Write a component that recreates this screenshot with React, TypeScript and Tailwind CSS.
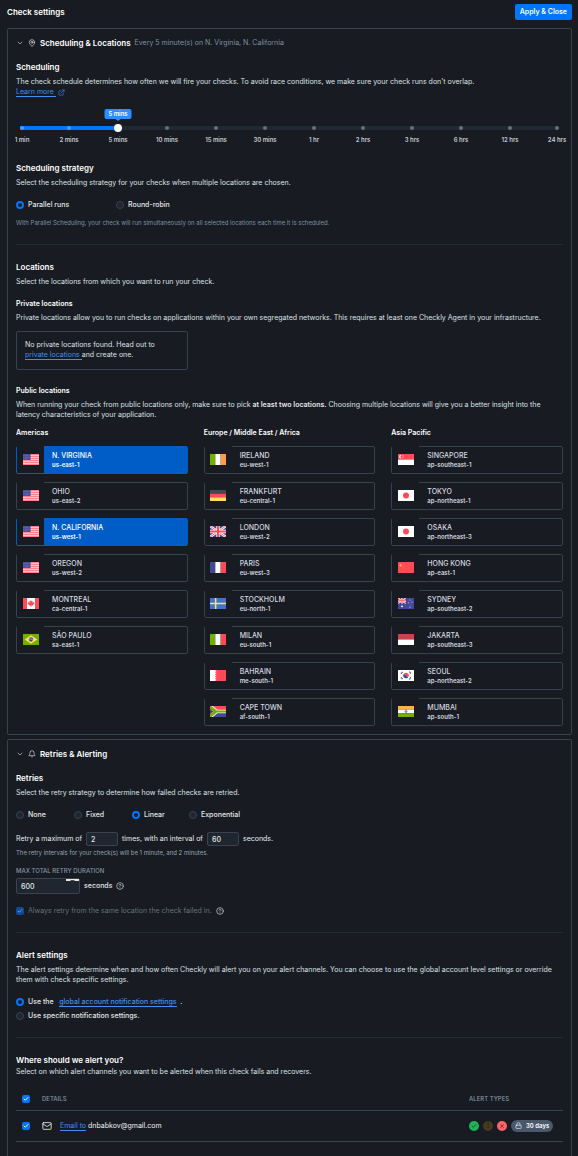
import React, { useState } from "react";
import { Bell, Check, ChevronDown, CircleHelp, ExternalLink, Lock, Mail, MapPin, X } from "lucide-react";

const intervals = ["1 min", "2 mins", "5 mins", "10 mins", "15 mins", "30 mins", "1 hr", "2 hrs", "3 hrs", "6 hrs", "12 hrs", "24 hrs"];

type Place = { name: string; code: string; flag: string };

const regions: { title: string; places: Place[] }[] = [
  {
    title: "Americas",
    places: [
      { name: "N. VIRGINIA", code: "us-east-1", flag: "us" },
      { name: "OHIO", code: "us-east-2", flag: "us" },
      { name: "N. CALIFORNIA", code: "us-west-1", flag: "us" },
      { name: "OREGON", code: "us-west-2", flag: "us" },
      { name: "MONTREAL", code: "ca-central-1", flag: "ca" },
      { name: "SÃO PAULO", code: "sa-east-1", flag: "br" },
    ],
  },
  {
    title: "Europe / Middle East / Africa",
    places: [
      { name: "IRELAND", code: "eu-west-1", flag: "ie" },
      { name: "FRANKFURT", code: "eu-central-1", flag: "de" },
      { name: "LONDON", code: "eu-west-2", flag: "gb" },
      { name: "PARIS", code: "eu-west-3", flag: "fr" },
      { name: "STOCKHOLM", code: "eu-north-1", flag: "se" },
      { name: "MILAN", code: "eu-south-1", flag: "it" },
      { name: "BAHRAIN", code: "me-south-1", flag: "bh" },
      { name: "CAPE TOWN", code: "af-south-1", flag: "za" },
    ],
  },
  {
    title: "Asia Pacific",
    places: [
      { name: "SINGAPORE", code: "ap-southeast-1", flag: "sg" },
      { name: "TOKYO", code: "ap-northeast-1", flag: "jp" },
      { name: "OSAKA", code: "ap-northeast-3", flag: "jp" },
      { name: "HONG KONG", code: "ap-east-1", flag: "cn" },
      { name: "SYDNEY", code: "ap-southeast-2", flag: "au" },
      { name: "JAKARTA", code: "ap-southeast-3", flag: "id" },
      { name: "SEOUL", code: "ap-northeast-2", flag: "kr" },
      { name: "MUMBAI", code: "ap-south-1", flag: "in" },
    ],
  },
];

const RED = "#ff4b55";
const NAVY = "#41479b";
const GREEN = "#73af00";

function Vertical({ colors }: { colors: string[] }) {
  return (
    <>
      {colors.map((c, i) => (
        <rect key={i} x={(i * 48) / 3} width="16" height="33" fill={c} />
      ))}
    </>
  );
}

function Horizontal({ colors }: { colors: string[] }) {
  const h = 33 / colors.length;
  return (
    <>
      {colors.map((c, i) => (
        <rect key={i} y={i * h} width="48" height={h} fill={c} />
      ))}
    </>
  );
}

function UnionJack() {
  return (
    <>
      <rect width="48" height="33" fill={NAVY} />
      <path d="M0 0L48 33M48 0L0 33" stroke="#fff" strokeWidth="7" />
      <path d="M0 0L48 33M48 0L0 33" stroke={RED} strokeWidth="2.6" />
      <path d="M24 0V33M0 16.5H48" stroke="#fff" strokeWidth="10" />
      <path d="M24 0V33M0 16.5H48" stroke={RED} strokeWidth="6" />
    </>
  );
}

const flagArt: Record<string, React.ReactNode> = {
  us: (
    <>
      <rect width="48" height="33" fill="#ffc4c8" />
      {[0, 1, 2, 3, 4, 5].map((i) => (
        <rect key={i} y={i * 6} width="48" height="3" fill="#ff8089" />
      ))}
      <rect width="23" height="18" fill="#4a4f9f" />
      <path d="M2 4.500H22M2 10.500H22M2 15H22" stroke="#a9acd2" strokeWidth="1.200" strokeDasharray="1.600 2.200" />
    </>
  ),
  ca: (
    <>
      <rect width="48" height="33" fill="#fff" />
      <rect width="12" height="33" fill={RED} />
      <rect x="36" width="12" height="33" fill={RED} />
      <path d="M24 6l2 4 3-1-1 5 4-2 1 3 2 1-6 6 0 1-4-.5V27h-2v-4.500l-4 .5 0-1-6-6 2-1 1-3 4 2-1-5 3 1z" fill={RED} />
    </>
  ),
  br: (
    <>
      <rect width="48" height="33" fill={GREEN} />
      <path d="M24 4L43 16.500L24 29L5 16.500Z" fill="#ffe15a" />
      <circle cx="24" cy="16.500" r="6.500" fill={NAVY} />
      <path d="M18 14.500q7-1 12 4" fill="none" stroke="#fff" strokeWidth="1.500" />
    </>
  ),
  ie: <Vertical colors={[GREEN, "#fff", "#ff9b4b"]} />,
  de: <Horizontal colors={["#464655", RED, "#ffe15a"]} />,
  gb: <UnionJack />,
  fr: <Vertical colors={[NAVY, "#fff", RED]} />,
  se: (
    <>
      <rect width="48" height="33" fill="#4173cd" />
      <path d="M17 0V33M0 16.500H48" stroke="#ffe15a" strokeWidth="4.500" />
    </>
  ),
  it: <Vertical colors={[GREEN, "#fff", RED]} />,
  bh: (
    <>
      <rect width="48" height="33" fill={RED} />
      <path d="M0 0H14L20 3.300L14 6.600L20 9.900L14 13.200L20 16.500L14 19.800L20 23.100L14 26.400L20 29.700L14 33H0Z" fill="#fff" />
    </>
  ),
  za: (
    <>
      <rect width="48" height="16.500" fill={RED} />
      <rect y="16.500" width="48" height="16.500" fill={NAVY} />
      <path d="M0 0L20 16.500L0 33M18 16.500H48" fill="none" stroke="#f5f5f5" strokeWidth="11" />
      <path d="M0 4L15 16.500L0 29Z" fill="#464655" />
      <path d="M0 1L19 16.500L0 32M18 16.500H48" fill="none" stroke={GREEN} strokeWidth="6.500" />
      <path d="M0 7.500L11 16.500L0 25.500" fill="none" stroke="#ffe15a" strokeWidth="2" />
    </>
  ),
  sg: (
    <>
      <Horizontal colors={[RED, "#fff"]} />
      <path d="M10 3.500a5 5 0 1 0 0 9.500a5.500 5.500 0 0 1 0-9.500" fill="#fff" />
      <path d="M12 5.500h1.500M16 5.500h1.500M14 3.500h1.500M12.500 10h1.500M16 10h1.500" stroke="#fff" strokeWidth="1.500" />
    </>
  ),
  jp: (
    <>
      <rect width="48" height="33" fill="#fff" />
      <circle cx="24" cy="16.500" r="9" fill={RED} />
    </>
  ),
  cn: (
    <>
      <rect width="48" height="33" fill={RED} />
      <path d="M8 5l1.300 3.400 3.700.1-2.900 2.300 1 3.500L8 12.200l-3.100 2.100 1-3.500L3 8.500l3.700-.1z" fill="#ffc850" />
      <path d="M15 4h1.500M18 7.500h1.500M18 11.500h1.500M15 15h1.500" stroke="#ffc850" strokeWidth="1.500" />
    </>
  ),
  au: (
    <>
      <rect width="48" height="33" fill={NAVY} />
      <svg width="24" height="17" viewBox="0 0 48 33" preserveAspectRatio="none">
        <UnionJack />
      </svg>
      <g fill="#fff">
        <circle cx="12" cy="25" r="2.800" />
        <circle cx="36" cy="6" r="1.500" />
        <circle cx="31" cy="14" r="1.500" />
        <circle cx="42" cy="12" r="1.500" />
        <circle cx="36" cy="27" r="1.800" />
        <circle cx="39" cy="18" r="1" />
      </g>
    </>
  ),
  id: <Horizontal colors={["#c8414b", "#fff"]} />,
  kr: (
    <>
      <rect width="48" height="33" fill="#fff" />
      <path d="M16.500 13a8 8 0 0 1 15 7q-4 2-7.500-3.500T16.500 13" fill={RED} />
      <path d="M16.500 13q3.500-2 7.500 3.500t7.500 3.500a8 8 0 0 1-15-7" fill={NAVY} />
      <path d="M9 11l5-6M34 5l5 6M9 22l5 6M34 28l5-6" stroke="#464655" strokeWidth="4" strokeDasharray="3 1" />
    </>
  ),
  in: (
    <>
      <Horizontal colors={["#fab446", "#fff", GREEN]} />
      <circle cx="24" cy="16.500" r="3.500" fill="none" stroke={NAVY} strokeWidth="1.300" />
      <path d="M24 13v7M20.500 16.500h7" stroke={NAVY} strokeWidth="1.200" />
    </>
  ),
};

function Flag({ id }: { id: string }) {
  return (
    <svg className="h-[11px] w-4" viewBox="0 0 48 33" preserveAspectRatio="none" aria-hidden="true">
      {flagArt[id]}
    </svg>
  );
}

function Heading({ children }: { children: React.ReactNode }) {
  return <h3 className="text-[8px] leading-[10px] font-semibold text-white">{children}</h3>;
}

function SubHeading({ children }: { children: React.ReactNode }) {
  return <h4 className="text-[7px] leading-[10px] font-semibold text-white">{children}</h4>;
}

function TextLink({ children }: { children: React.ReactNode }) {
  return (
    <a href="#" className="border-b border-[#3d90f5] text-[#3d90f5]">
      {children}
    </a>
  );
}

function Radio({ name, label, checked = false, children }: { name: string; label?: string; checked?: boolean; children?: React.ReactNode }) {
  return (
    <label className="flex items-center gap-1 text-[7px] leading-[10px] font-medium text-[#e3e6ea]">
      <input
        type="radio"
        name={name}
        defaultChecked={checked}
        className="size-2 shrink-0 appearance-none rounded-full border border-[#38424f] bg-[#20262f] checked:border-2 checked:border-[#0075ff] checked:bg-[#181b21]"
      />
      {label}
      {children}
    </label>
  );
}

function Tick({ label, disabled = false }: { label: string; disabled?: boolean }) {
  return (
    <span className="relative flex size-2 shrink-0">
      <input
        type="checkbox"
        aria-label={label}
        defaultChecked
        disabled={disabled}
        className="size-2 appearance-none rounded-[2px] bg-[#20262f] checked:bg-[#0075ff] disabled:checked:bg-[#0c4a9a]"
      />
      <Check className={disabled ? "pointer-events-none absolute inset-px size-1.5 text-[#8e959e]" : "pointer-events-none absolute inset-px size-1.5 text-white"} strokeWidth={4} />
    </span>
  );
}

function Panel({ icon, title, summary, grow, children }: { icon: React.ReactNode; title: string; summary?: string; grow?: boolean; children: React.ReactNode }) {
  return (
    <section
      className={
        grow
          ? "flex grow flex-col rounded-t-[2px] border border-b-0 border-[#36424f] px-2 pt-2"
          : "flex flex-col rounded-[2px] border border-[#36424f] px-2 pt-2 pb-2"
      }
    >
      <h2 className="flex items-center text-[8px] leading-3 font-semibold text-white">
        <button type="button" aria-label={"Toggle " + title} className="mr-1 flex size-2 items-center justify-center text-[#c5cad1]">
          <ChevronDown className="size-2" />
        </button>
        <span className="mr-1 flex size-2 text-[#dfe2e6]">{icon}</span>
        {title}
        {summary && <span className="ml-1 text-[7px] font-normal text-[#7d91a3]">{summary}</span>}
      </h2>
      {children}
    </section>
  );
}

function LocationCard({ place, selected, onToggle }: { place: Place; selected: boolean; onToggle: () => void }) {
  return (
    <button
      type="button"
      aria-pressed={selected}
      onClick={onToggle}
      className={
        selected
          ? "flex h-7 rounded-[2px] border border-[#005dc8] bg-[#005dc8] text-left text-white"
          : "flex h-7 rounded-[2px] border border-[#36424f] text-left text-[#d5d9e0]"
      }
    >
      <span className="-mt-px flex h-[27px] w-[27px] items-center justify-center bg-[#181b21]">
        <Flag id={place.flag} />
      </span>
      <span className="flex flex-col pt-1 pl-2 leading-[9px]">
        <span className="text-[7px] font-medium">{place.name}</span>
        <span className="text-[6px] font-semibold">{place.code}</span>
      </span>
    </button>
  );
}

function SmallInput({ label, value }: { label: string; value: string }) {
  return (
    <input
      type="text"
      inputMode="numeric"
      aria-label={label}
      defaultValue={value}
      className="h-3.5 w-8 rounded-[2px] border border-[#38434f] bg-[#20262f] px-1 text-[7px] leading-3 font-medium text-[#e3e6ea] outline-none"
    />
  );
}

function Divider() {
  return <hr className="border-t border-[#242b35]" />;
}

export default function App() {
  const [step, setStep] = useState(2);
  const [selected, setSelected] = useState<string[]>(["us-east-1", "us-west-1"]);
  const fill = (step / (intervals.length - 1)) * 100;

  const toggle = (code: string) =>
    setSelected((all) => (all.includes(code) ? all.filter((c) => c !== code) : [...all, code]));

  return (
    <main className="flex min-h-screen flex-col bg-[#181b21] pr-1.5 pl-[7px] font-['Inter',sans-serif] text-[7px] leading-[10px] font-normal text-[#dde1e7]">
      <header className="flex h-7 items-center justify-between pb-1">
        <h1 className="text-[8px] leading-[10px] font-semibold text-white">Check settings</h1>
        <button type="button" className="h-4 rounded-[2px] bg-[#0075ff] px-[5px] text-[7px] leading-[10px] font-semibold text-white">
          Apply &amp; Close
        </button>
      </header>

      <Panel icon={<MapPin className="size-2" />} title="Scheduling & Locations" summary="Every 5 minute(s) on N. Virginia, N. California">
        <div className="mt-[13px]">
          <Heading>Scheduling</Heading>
          <p className="mt-[5px]">
            The check schedule determines how often we will fire your checks. To avoid race conditions, we make sure your check runs don't overlap.
            <br />
            <a href="#" className="text-[#3d90f5]">
              <span className="border-b border-[#3d90f5]">Learn more&nbsp;</span>
              <ExternalLink className="ml-0.5 inline size-[7px]" />
            </a>
          </p>
        </div>

        <div className="mt-[27px]">
          <div className="relative h-2">
            <div className="absolute inset-x-1 top-0.5 flex h-1 rounded-[2px] bg-[#222831]">
              <div className="h-1 rounded-l-[2px] bg-[#0075ff]" style={{ width: fill + "%" }} />
            </div>
            <div className="absolute inset-x-1 top-0.5 flex justify-between">
              {intervals.map((name, i) => (
                <span key={name} className="flex w-0 justify-center first:-mr-1 first:w-1 last:-ml-1 last:w-1">
                  <span className={i <= step ? "size-1 shrink-0 rounded-full bg-[#4a9bff]" : "size-1 shrink-0 rounded-full bg-[#69707a]"} />
                </span>
              ))}
            </div>
            <input
              type="range"
              aria-label="Check interval"
              min={0}
              max={11}
              value={step}
              onChange={(e) => setStep(Number(e.target.value))}
              className="absolute inset-0 h-2 w-full appearance-none bg-transparent [&::-webkit-slider-thumb]:size-2 [&::-webkit-slider-thumb]:appearance-none [&::-webkit-slider-thumb]:rounded-full [&::-webkit-slider-thumb]:bg-white"
            />
            <div className="pointer-events-none absolute inset-x-1 bottom-[13px] h-[10px]">
              <output
                className="absolute flex h-[10px] w-[27px] -translate-x-1/2 items-center justify-center rounded-[2px] bg-[#2f8cff] text-[6px] font-semibold whitespace-nowrap text-white"
                style={{ left: fill + "%" }}
              >
                {intervals[step]}
                <svg className="absolute top-full left-[11px] h-0.5 w-[5px]" viewBox="0 0 5 2" aria-hidden="true">
                  <path d="M0 0H5L2.500 2Z" fill="#2f8cff" />
                </svg>
              </output>
            </div>
          </div>
          <div className="mt-[3px] flex justify-between px-1 text-[6px] leading-[10px] font-semibold text-[#c5cad1]">
            {intervals.map((name) => (
              <span key={name} className="flex w-0 justify-center whitespace-nowrap first:-mr-1 first:w-1 last:-ml-1 last:w-1">
                {name}
              </span>
            ))}
          </div>
        </div>

        <div className="mt-[18px]">
          <Heading>Scheduling strategy</Heading>
          <p className="mt-[5px]">Select the scheduling strategy for your checks when multiple locations are chosen.</p>
          <div className="mt-3 flex">
            <div className="w-[100px]">
              <Radio name="strategy" label="Parallel runs" checked />
            </div>
            <Radio name="strategy" label="Round-robin" />
          </div>
          <p className="mt-2 text-[6px] font-normal text-[#7d91a3]">
            With Parallel Scheduling, your check will run simultaneously on all selected locations each time it is scheduled.
          </p>
        </div>

        <div className="mt-4">
          <Divider />
        </div>

        <div className="mt-[17px]">
          <Heading>Locations</Heading>
          <p className="mt-[5px]">Select the locations from which you want to run your check.</p>
        </div>

        <div className="mt-3">
          <SubHeading>Private locations</SubHeading>
          <p className="mt-1">
            Private locations allow you to run checks on applications within your own segregated networks. This requires at least one Checkly Agent in your infrastructure.
          </p>
          <div className="mt-2 grid grid-cols-3 gap-4">
            <p className="rounded-[2px] border border-[#36424f] px-2 pt-2 pb-[9px]">
              No private locations found. Head out to
              <br />
              <TextLink>private locations&nbsp;</TextLink>and create one.
            </p>
          </div>
        </div>

        <div className="mt-4">
          <SubHeading>Public locations</SubHeading>
          <p className="mt-1">
            When running your check from public locations only, make sure to pick <strong className="font-semibold text-[#e3e6ea]">at least two locations.</strong> Choosing
            multiple locations will give you a better insight into the <br />
            latency characteristics of your application.
          </p>
        </div>

        <div className="mt-2 grid grid-cols-3 gap-4">
          {regions.map((region) => (
            <div key={region.title} className="flex flex-col gap-2">
              <SubHeading>{region.title}</SubHeading>
              {region.places.map((place) => (
                <LocationCard key={place.code} place={place} selected={selected.includes(place.code)} onToggle={() => toggle(place.code)} />
              ))}
            </div>
          ))}
        </div>
      </Panel>

      <div className="h-1" />

      <Panel icon={<Bell className="size-2" />} title="Retries & Alerting" grow>
        <div className="mt-[13px]">
          <Heading>Retries</Heading>
          <p className="mt-[5px]">Select the retry strategy to determine how failed checks are retried.</p>
          <div className="mt-3 flex">
            <div className="w-[58px]">
              <Radio name="retry" label="None" />
            </div>
            <div className="w-[58px]">
              <Radio name="retry" label="Fixed" />
            </div>
            <div className="w-[57px]">
              <Radio name="retry" label="Linear" checked />
            </div>
            <Radio name="retry" label="Exponential" />
          </div>
        </div>

        <div className="mt-3 flex items-center gap-1 text-[#e8ebef]">
          <span>Retry a maximum of</span>
          <SmallInput label="Maximum retries" value="2" />
          <span>times, with an interval of</span>
          <SmallInput label="Interval in seconds" value="60" />
          <span>seconds.</span>
        </div>
        <p className="mt-0.5 text-[6px] font-normal text-[#93a3b1]">The retry intervals for your check(s) will be 1 minute, and 2 minutes.</p>

        <label htmlFor="duration" className="mt-2 text-[6px] leading-[10px] font-medium text-[#8396a6]">
          MAX TOTAL RETRY DURATION
        </label>
        <div className="mt-0.5 flex items-center gap-1 text-[#e3e6ea]">
          <div className="relative flex">
            <input
              id="duration"
              type="text"
              inputMode="numeric"
              defaultValue="600"
              className="h-4 w-16 rounded-[2px] border border-[#38434f] bg-[#20262f] px-1 text-[7px] leading-3 font-medium text-[#e3e6ea] outline-none"
            />
            <svg className="absolute top-px right-px h-0.5 w-[13px]" viewBox="0 0 13 2" aria-hidden="true">
              <path d="M0 0H13V2H0Z" fill="#e8e8e8" />
              <path d="M4 2L5 1H8L9 2Z" fill="#505050" />
            </svg>
          </div>
          <span className="font-medium">seconds</span>
          <CircleHelp className="size-2 text-[#d5d9e0]" />
        </div>

        <div className="mt-3 flex items-center gap-1 text-[#68707b]">
          <Tick label="Always retry from the same location" disabled />
          <span>Always retry from the same location the check failed in.</span>
          <CircleHelp className="size-2 text-[#d5d9e0]" />
        </div>

        <div className="mt-4">
          <Divider />
        </div>

        <div className="mt-[17px]">
          <Heading>Alert settings</Heading>
          <p className="mt-[5px]">
            The alert settings determine when and how often Checkly will alert you on your alert channels. You can choose to use the global account level settings or override <br />
            them with check specific settings.
          </p>
          <div className="mt-3 flex flex-col gap-1">
            <Radio name="alert" checked>
              <span>
                Use the&nbsp;&nbsp; <TextLink>global account notification settings</TextLink> &nbsp;.
              </span>
            </Radio>
            <Radio name="alert" label="Use specific notification settings." />
          </div>
        </div>

        <div className="mt-4">
          <Divider />
        </div>

        <div className="mt-[17px]">
          <Heading>Where should we alert you?</Heading>
          <p className="mt-0.5">Select on which alert channels you want to be alerted when this check fails and recovers.</p>
        </div>

        <table className="mt-3 w-full border-collapse text-left">
          <thead>
            <tr className="h-[21px] border-b border-[#38434f] text-[6px] text-[#8396a6]">
              <th className="w-[26px] pl-1.5">
                <Tick label="Select all channels" />
              </th>
              <th className="font-medium">DETAILS</th>
              <th className="w-[94px] font-medium">ALERT TYPES</th>
            </tr>
          </thead>
          <tbody>
            <tr className="h-[31px] border-b border-[#38434f]">
              <td className="pl-1.5">
                <Tick label="Email to dnbabkov@gmail.com" />
              </td>
              <td>
                <div className="flex items-center gap-2 text-[#eef0f3]">
                  <Mail className="size-[10px]" />
                  <span>
                    <TextLink>Email to</TextLink> dnbabkov@gmail.com
                  </span>
                </div>
              </td>
              <td>
                <div className="flex items-center gap-1">
                  <span className="flex size-[10px] items-center justify-center rounded-full bg-[#1fb25a] text-[#0d4d27]">
                    <Check className="size-1.5" strokeWidth={3} />
                  </span>
                  <span className="flex size-[10px] items-center justify-center rounded-full bg-[#453b22] text-[#1d1a14]">!</span>
                  <span className="flex size-[10px] items-center justify-center rounded-full bg-[#ff6467] text-[#7a2024]">
                    <X className="size-1.5" strokeWidth={3} />
                  </span>
                  <span className="flex h-3 w-[42px] items-center gap-1 rounded-full bg-[#4a586b] pl-1 text-[6px] font-semibold whitespace-nowrap text-white">
                    <Lock className="size-[7px]" />
                    30 days
                  </span>
                </div>
              </td>
            </tr>
          </tbody>
        </table>
      </Panel>
    </main>
  );
}
